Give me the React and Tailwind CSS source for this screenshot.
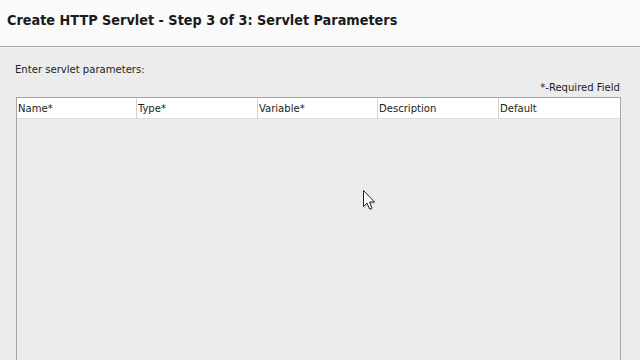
import React from "react";

const columns = ["Name*", "Type*", "Variable*", "Description", "Default"];

const Cursor = () => (
  <svg width="18" height="26" viewBox="0 0 18 26" className="absolute left-[362px] top-[189px]">
    <path d="M2.5 3.5 L2.5 19.5 L6 16 L8.5 22 L11 21 L8.5 15 L13.5 15 Z" fill="#9a9a9a" opacity="0.35" />
    <path d="M1.5 1.5 L1.5 17.5 L5 14 L7.5 20 L10 19 L7.5 13 L12.5 13 Z" fill="#fff" stroke="#222" strokeWidth="1" strokeLinejoin="round" />
  </svg>
);

export default function App() {
  return (
    <div className="relative w-[640px] h-[360px] overflow-hidden bg-[#ececec] font-['DejaVu_Sans_Condensed','DejaVu_Sans',sans-serif] text-[#222]">
      <div className="h-[47px] bg-[#fafafa] border-b border-[#a3a3a3] pl-[7px] pt-[10px]">
        <h1 className="text-[14.3px] font-bold text-[#1b1b1b]">
          Create HTTP Servlet - Step 3 of 3: Servlet Parameters
        </h1>
      </div>
      <div className="border-t border-[#f7f7f7] px-[16px] pt-[15px]">
        <p className="text-[11.2px] leading-[14px] -ml-[1px]">Enter servlet parameters:</p>
        <p className="text-[11.2px] leading-[14px] text-right mt-[4px] -mr-[16px] pr-[20px]">*-Required Field</p>
        <div className="mt-[2px] w-[605px] h-[300px] border border-[#a5a5a5] bg-[#ececec]">
          <div className="grid grid-cols-[119px_121px_120px_121px_1fr] h-[21px] bg-white border-b border-[#dcdcdc]">
            {columns.map((c, i) => (
              <div key={c} className={"text-[11.2px] leading-[21px] pl-[1px] " + (i > 0 ? "border-l border-[#d0d0d0]" : "")}>
                {c}
              </div>
            ))}
          </div>
        </div>
      </div>
      <Cursor />
    </div>
  );
}
